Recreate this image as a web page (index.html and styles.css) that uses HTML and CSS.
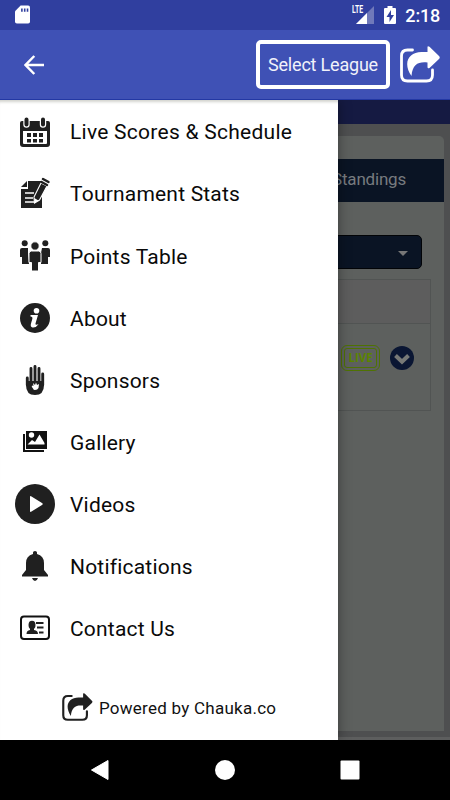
FILE: index.html
```html
<!DOCTYPE html>
<html lang="en">
<head>
<meta charset="utf-8">
<title>Chauka</title>
<link rel="stylesheet" href="styles.css">
</head>
<body>
<svg class="defs" aria-hidden="true">
  <symbol id="share" viewBox="0 0 40 38">
    <path d="M13 4H8Q2 4 2 10V29Q2 35 8 35H27Q33 35 33 29V24" fill="none" stroke="currentColor" stroke-width="2.800" stroke-linecap="round"/>
    <path d="M28 1Q28-.5 30 .7L39.500 10Q41 11.500 39.500 13L30 22Q28 23 28 21V16.500C19 15.500 13 18 12 30C3 17 9 6 22 6H28Z" fill="currentColor"/>
  </symbol>
</svg>
<div class="screen">
  <div class="status">
    <svg class="sd" viewBox="0 0 16 19"><path d="M6 0H14Q16 0 16 2V17Q16 19 14 19H2Q0 19 0 17V6Z" fill="#fff"/><path d="M6.500 3h1.700v3.500H6.500zM9.500 3h1.700v3.500H9.500zM12.500 3h1.700v3.500h-1.700z" fill="#303f9f"/></svg>
    <div class="status-right">
      <div class="signal"><span class="lte">LTE</span>
        <svg viewBox="0 0 18 18"><path d="M18 0V18H0Z" fill="#7079ba"/><path d="M11 7V18H0Z" fill="#fff"/></svg></div>
      <svg class="battery" viewBox="0 0 12 18"><path d="M3.500 0h5v2H11Q12 2 12 3V17Q12 18 11 18H1Q0 18 0 17V3Q0 2 1 2H3.500Z" fill="#fff"/><path d="M7 4L2.500 11H5.500V16L10 9H7Z" fill="#303f9f"/></svg>
      <span class="time">2:18</span>
    </div>
  </div>
  <header class="appbar">
    <svg class="back" viewBox="0 0 20 20"><path d="M10.300 1L1.500 10L10.300 19M2 10H20" fill="none" stroke="#fff" stroke-width="2.500"/></svg>
    <button class="league">Select League</button>
    <svg class="share-top"><use href="#share"/></svg>
  </header>
  <main class="main">
    <div class="page">
      <div class="strip"></div>
      <div class="card">
        <div class="tabs">Standings</div>
        <div class="select"><i></i></div>
        <div class="match">
          <div class="match-head"></div>
          <div class="match-row">
            <span class="live"><b>LIVE</b></span>
            <svg class="chevron" viewBox="0 0 24 24"><circle cx="12" cy="12" r="12" fill="#0a1633"/><path d="M5.500 9.500L12 15.800L18.500 9.500" fill="none" stroke="#777977" stroke-width="4"/></svg>
          </div>
        </div>
      </div>
      <div class="page-end"></div>
    </div>
    <nav class="drawer">
      <ul class="menu">
        <li><svg viewBox="0 0 40 40"><path d="M7 9H33Q35 9 35 11V32Q35 35 32 35H8Q5 35 5 32V11Q5 9 7 9Z" fill="#202020"/><path d="M8 19H32V31Q32 32 31 32H9Q8 32 8 31Z" fill="#fff"/><path d="M12 21h4v4h-4zM18 21h4v4h-4zM24 21h4v4h-4zM12 27h4v3.500h-4zM18 27h4v3.500h-4zM24 27h4v3.500h-4z" fill="#202020"/><path d="M11.500 7V12.500M28 7V12.500" stroke="#fff" stroke-width="6.400" stroke-linecap="round"/><path d="M11.500 7.500V12.500M28 7.500V12.500" stroke="#202020" stroke-width="4" stroke-linecap="round"/></svg><span>Live Scores &amp; Schedule</span></li>
        <li><svg viewBox="0 0 40 40"><path d="M13 7H27V34H6V15H13Z" fill="#202020"/><path d="M6 13L12 7V13Z" fill="#202020"/><path d="M10 19H19M10 24H18M10 28H19" stroke="#fff" stroke-width="1.500"/><path d="M26 9L32 12L24.500 26L19.500 29L19 23Z" fill="#202020" stroke="#fff" stroke-width="1.100"/><path d="M28 5L33.500 8M26.500 8L32 11" stroke="#202020" stroke-width="2.500" stroke-linecap="round"/><path d="M19.200 24L23.500 26.500L19.500 29Z" fill="#fff"/></svg><span>Tournament Stats</span></li>
        <li><svg viewBox="0 0 40 40"><g fill="#202020"><circle cx="9.700" cy="7.300" r="3"/><circle cx="30.300" cy="7.300" r="3"/><path d="M7 12H13V17L14 28H7V21H5V14Q5 12 7 12ZM27 12H33Q35 12 35 14V21H33V28H26V17Z"/><circle cx="20" cy="10" r="4.200" stroke="#fff"/><path d="M16.500 15H23.500Q26 15 26 17.500V26.500H23.500V35H16.500V26.500H14V17.500Q14 15 16.500 15Z" stroke="#fff"/></g></svg><span>Points Table</span></li>
        <li><svg viewBox="0 0 40 40"><circle cx="20" cy="20" r="15" fill="#202020"/><circle cx="21.500" cy="12.800" r="2.800" fill="#fff"/><path d="M15.500 17H23L20.500 25.500Q20 27.500 23.500 26.300Q21 30 17.500 29.500Q15 29 16 25.500L17.300 21Q18 18.500 15.500 18.500Z" fill="#fff"/></svg><span>About</span></li>
        <li><svg viewBox="0 0 40 40"><path d="M12.300 18V25M16 8.500V24M20 6.500V24M24 8.500V24M27.700 14V25" stroke="#202020" stroke-width="2.900" stroke-linecap="round"/><path d="M11 21H29V25Q29 35 20 35Q11 35 11 25Z" fill="#202020"/><path d="M18 28.500Q16 26.500 17 25.500L18.500 26L18 23L20 25L21 22.500L22 25L24 24L23.500 28Q22.500 30 20 30Q18.500 30 18 28.500Z" fill="#fff"/></svg><span>Sponsors</span></li>
        <li><svg viewBox="0 0 40 40"><path d="M11 9H32V27H11Z" fill="#111"/><path d="M9 12V29H29" fill="none" stroke="#111" stroke-width="2"/><circle cx="16.500" cy="13" r="2.700" fill="#fff"/><path d="M12.500 22.500L17 18L20 20L24.500 12.500L29.500 21V22.500Z" fill="#fff"/></svg><span>Gallery</span></li>
        <li><svg viewBox="0 0 40 40"><circle cx="20" cy="20" r="20" fill="#202020"/><path d="M15 13Q15 11.500 16.500 12.500L27 19Q28.500 20 27 21L16.500 27.500Q15 28.500 15 27Z" fill="#fff"/></svg><span>Videos</span></li>
        <li><svg viewBox="0 0 40 40"><path d="M18 8V6.500Q18 5 20 5Q22 5 22 6.500V8Q29 10 29 17V24L33 29V30.500H7V29L11 24V17Q11 10 18 8ZM17 32H23Q22 35 20 35Q18 35 17 32Z" fill="#202020"/></svg><span>Notifications</span></li>
        <li><svg viewBox="0 0 40 40"><rect x="6" y="8.500" width="28" height="22.500" rx="3" fill="none" stroke="#111" stroke-width="2"/><ellipse cx="17" cy="17" rx="3.500" ry="4.300" fill="#202020"/><path d="M15 20H19V22Q23 22.500 23 26H11.500Q11.500 22.500 15 22Z" fill="#202020"/><path d="M21 15H28.500M22 19.500H28.500M24 24.500H28.500" stroke="#202020" stroke-width="2"/></svg><span>Contact Us</span></li>
      </ul>
      <div class="powered"><svg><use href="#share"/></svg><span>Powered by Chauka.co</span></div>
    </nav>
  </main>
  <footer class="softkeys">
    <svg viewBox="0 0 20 20"><path d="M18 .5V19.500L1.500 10Z" fill="#fff" stroke="#fff" stroke-linejoin="round"/></svg>
    <svg viewBox="0 0 20 20"><circle cx="10" cy="10" r="10" fill="#fff"/></svg>
    <svg viewBox="0 0 20 20"><rect x=".5" y=".5" width="19" height="19" rx="1" fill="#fff"/></svg>
  </footer>
</div>
</body>
</html>
```

FILE: styles.css
```css
* { box-sizing: border-box; }
body { margin: 0; font-family: Roboto, sans-serif; }
svg { display: block; flex: none; }
.defs { position: absolute; width: 0; height: 0; }
.screen { width: 450px; height: 800px; display: grid; grid-template-rows: 30px 70px 640px 60px; overflow: hidden; }
.status { background: #303f9f; display: flex; justify-content: space-between; align-items: flex-start; padding: 5px 10px 0 15px; color: #fff; }
.sd { width: 15px; height: 19px; }
.status-right { display: flex; align-items: flex-start; }
.signal { position: relative; padding: 1px 0 0 4px; margin-right: 10px; }
.signal svg { width: 18px; height: 18px; }
.lte { position: absolute; left: 0; top: 0; font-size: 10.5px; line-height: 10px; font-weight: 700; transform: scaleX(.65); transform-origin: left; }
.battery { width: 12px; height: 18px; margin: 1px 9px 0 0; }
.time { font-size: 18px; font-weight: 500; line-height: 22px; letter-spacing: -.2px; }
.appbar { background: #3f51b5; display: flex; align-items: flex-start; padding: 10px 10px 0 24px; border-bottom: 1px solid #2338a4; }
.back { width: 20px; height: 20px; margin: 15px auto 0 0; }
.league { width: 134px; height: 49px; padding: 0; background: none; border: 4px solid #fff; border-radius: 5px; color: #f1f2fa; font: 18px Roboto, sans-serif; letter-spacing: -.2px; white-space: nowrap; }
.share-top { width: 41px; height: 38px; color: #fff; margin: 6px 0 0 9px; }
.main { position: relative; background: #4e4f50; overflow: hidden; }
.page { height: 640px; padding-right: 6px; display: flex; flex-direction: column; }
.page-end { height: 3px; margin: auto -6px 0 0; background: #5d5e5e; }
.strip { height: 24px; margin-right: -6px; background: #151a42; }
.card { margin-top: 12px; height: 595px; background: #5d605e; border-radius: 5px 5px 0 0; padding-top: 23px; }
.tabs { height: 43px; background: #0a1424; color: #777b7f; font-size: 17px; line-height: 41px; text-align: right; padding-right: 38px; letter-spacing: -.2px; }
.select { height: 34px; margin: 33px 22px 0 12px; background: #0a1424; border: 1px solid #020407; border-radius: 5px; display: flex; align-items: center; justify-content: flex-end; padding: 3px 13px 0 0; }
.select i { border: 5px solid transparent; border-top-color: #777; border-bottom: 0; }
.match { margin: 10px 13px 0 6px; height: 132px; border: 1px solid #515453; }
.match-head { height: 44px; background: #5d5d5d; border-bottom: 1px solid #515453; }
.match-row { display: flex; align-items: center; justify-content: flex-end; padding: 21px 16px 0 0; gap: 10px; }
.live { width: 39px; height: 26px; border: 1.5px solid #4f7203; border-radius: 6px; padding: 2px; }
.live b { display: block; height: 20px; border: 1px solid #4f7203; border-radius: 3px; color: #5b8400; font: bold 11.5px/17px "Open Sans", sans-serif; text-align: center; }
.chevron { width: 24px; height: 24px; }
.drawer { position: absolute; top: 0; left: 0; width: 338px; height: 640px; background: #fff; box-shadow: 0 0 12px rgba(0,0,0,.4), inset 0 4px 3px -2px #d2d3ce; display: flex; flex-direction: column; }
.menu { list-style: none; margin: 0; padding: 1px 0 0 15px; }
.menu li { height: 62px; display: flex; align-items: center; gap: 15px; font-size: 21px; letter-spacing: .2px; color: #0a0a0a; white-space: nowrap; }
.menu li:first-child { letter-spacing: .26px; }
.menu li:nth-child(n+3) span { padding-top: 2px; }
.menu svg { width: 40px; height: 40px; }
.powered { display: flex; align-items: center; gap: 6px; padding: 0 0 0 61px; margin-top: 34px; font-size: 17px; letter-spacing: .25px; color: #111; white-space: nowrap; }
.powered svg { width: 32px; height: 29px; color: #202020; }
.softkeys { background: #000; display: flex; align-items: center; justify-content: center; gap: 105px; }
.softkeys svg { width: 20px; height: 20px; }
```
